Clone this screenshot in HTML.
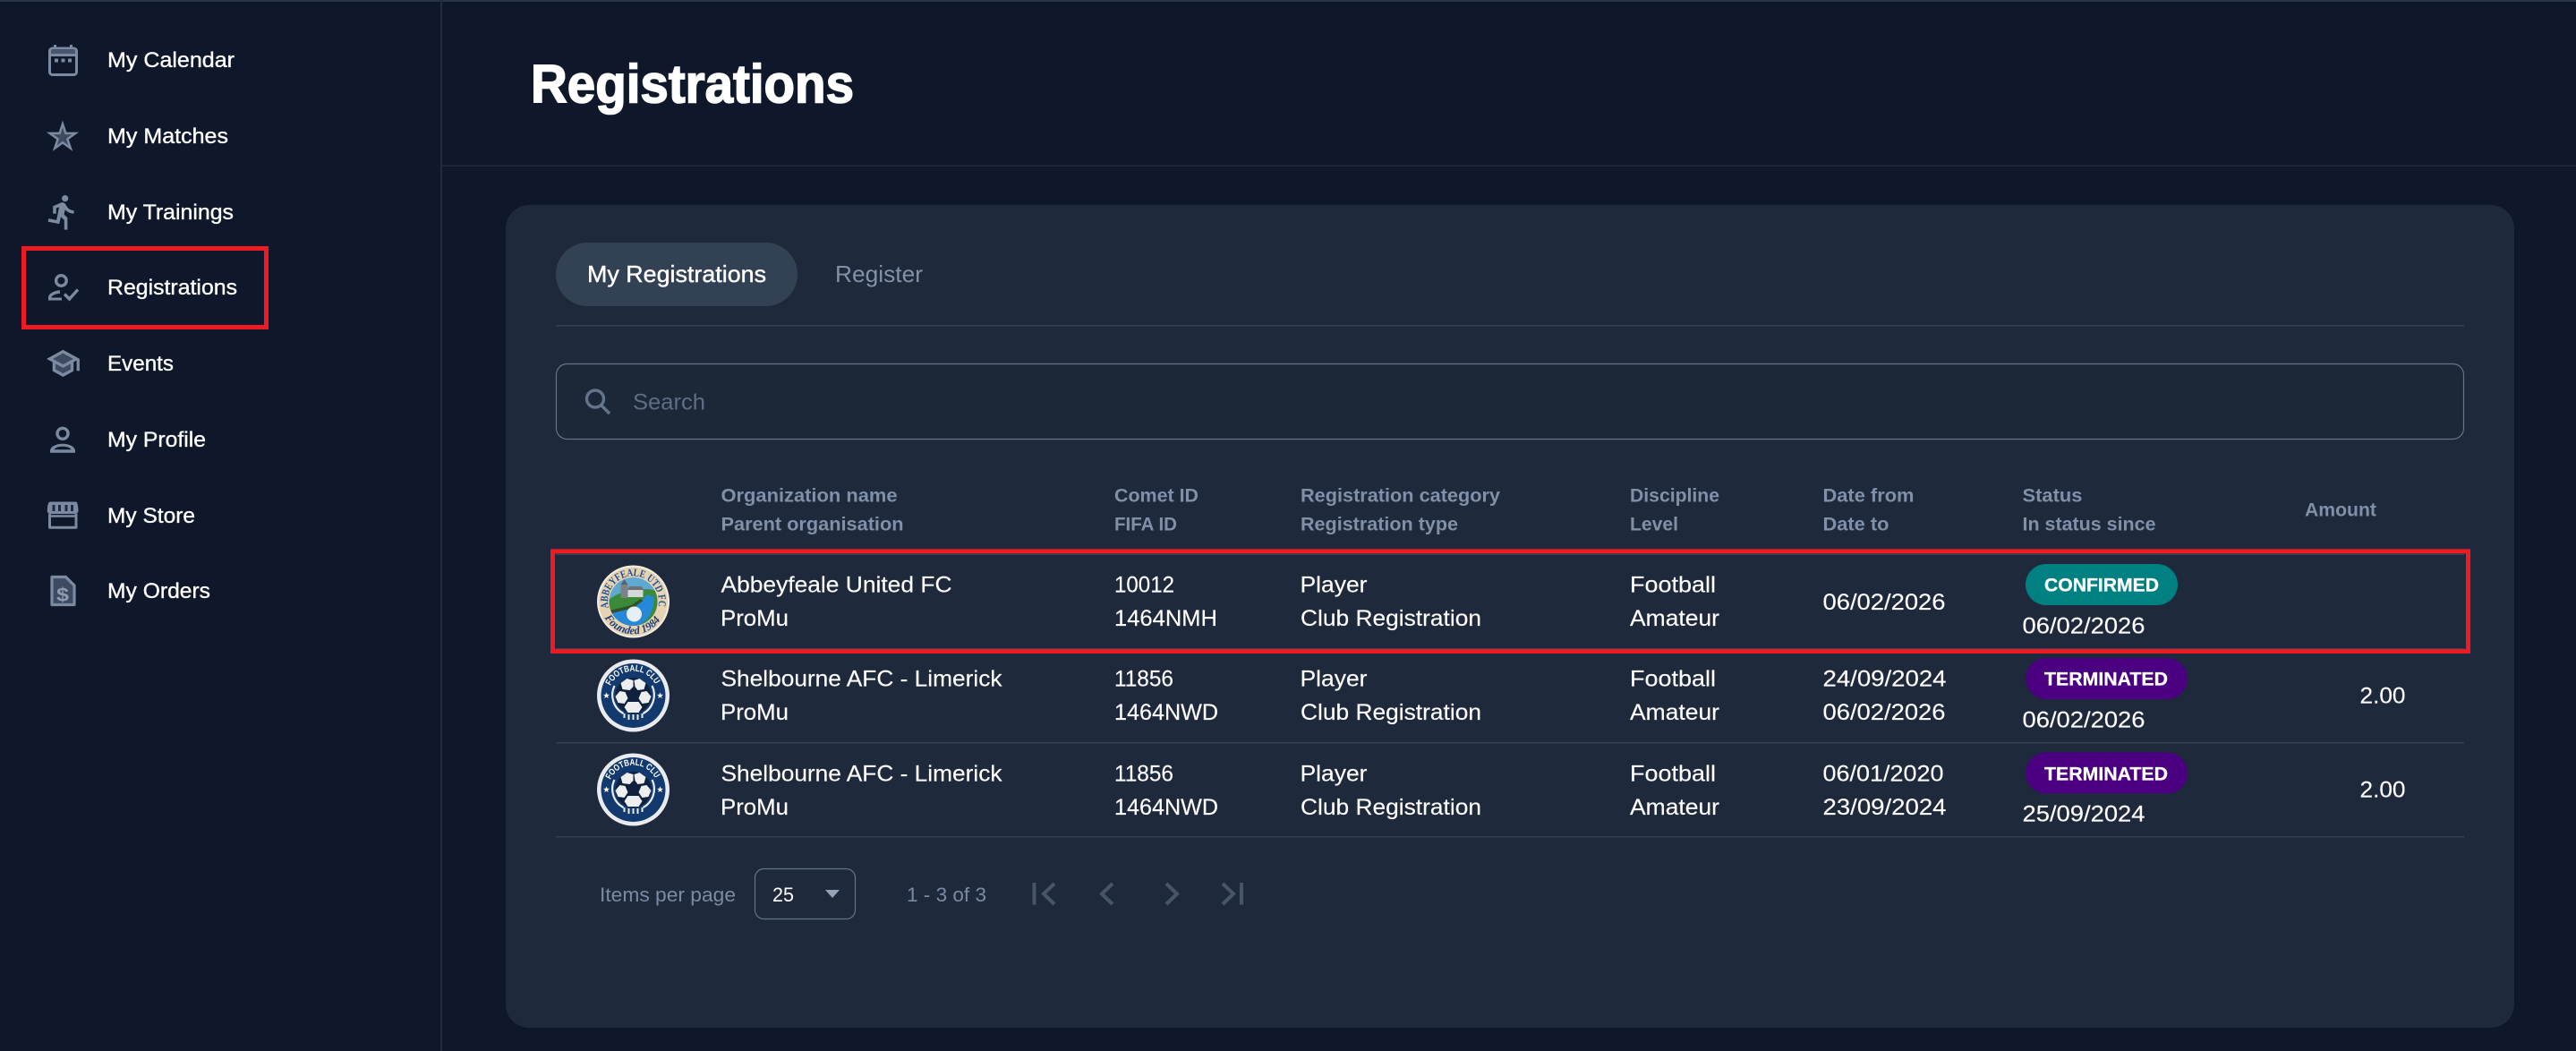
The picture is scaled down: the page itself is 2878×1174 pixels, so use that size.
<!DOCTYPE html>
<html lang="en"><head><meta charset="utf-8"><title>Registrations</title>
<style>
html,body{margin:0;padding:0;background:#0f172a;width:2878px;height:1174px;overflow:hidden}
svg{display:block}
text{font-family:"Liberation Sans",sans-serif}
.nav{font-size:24.5px;fill:#fff;stroke:#fff;stroke-width:.35px}
.th{font-size:21px;font-weight:700;fill:#8090a8}
.td{font-size:25px;fill:#fff;stroke:#fff;stroke-width:.15px}
.bd{font-size:21px;font-weight:700;fill:#fff;stroke:#fff;stroke-width:.3px}
.pg{font-size:22px;fill:#7b8aa3}
</style></head><body>
<svg xmlns="http://www.w3.org/2000/svg" width="2878" height="1174" viewBox="0 0 2878 1174">
<defs>
<path id="arcT" d="M-27.6 7A28.5 28.5 0 1 1 27.6 7"/>
<path id="arcB" d="M-32 18A37 37 0 0 0 32 18"/>
<path id="arcF" d="M-25.5 -11A28 28 0 0 1 25.5 -11"/>
<clipPath id="inner"><circle r="27"/></clipPath>
<polygon id="st" points="0,-3.6 1,-1.1 3.5,-1.1 1.5,.5 2.2,3 0,1.5 -2.2,3 -1.5,.5 -3.5,-1.1 -1,-1.1" fill="#fff"/>
<g id="fc">
<circle r="40.5" fill="#e9ebee"/>
<circle r="36" fill="#123a6e"/>
<text style="font-size:10px;font-weight:700" fill="#fff"><textPath href="#arcF" textLength="68" lengthAdjust="spacingAndGlyphs">FOOTBALL CLUB</textPath></text>
<use href="#st" x="-30" y="0"/><use href="#st" x="30" y="0"/>
<path d="M-21 -11A23.5 23.5 0 0 0 -11 20M21 -11A23.5 23.5 0 0 1 11 20" fill="none" stroke="#e9ebee" stroke-width="2.2"/>
<circle r="20" fill="#0f203c"/>
<g fill="#eceef0">
<polygon points="-7,-19 0,-17 0,-10 -4,-6 -12,-7 -14,-14"/>
<polygon points="7,-19 1,-17 2,-10 5,-6 12,-7 14,-14"/>
<polygon points="-15,-5 -9,-4 -6,3 -10,9 -17,8 -20,1"/>
<polygon points="15,-5 9,-4 6,3 10,9 17,8 20,1"/>
<polygon points="-6,7 6,7 10,13 6,19 -6,19 -10,13"/>
</g>
<g fill="#e9ebee"><rect x="-11" y="20" width="2" height="5"/><rect x="-6" y="21" width="2" height="6"/><rect x="-1" y="21" width="2" height="6"/><rect x="4" y="21" width="2" height="6"/><rect x="9" y="20" width="2" height="5"/></g>
</g>
</defs>

<rect width="2878" height="1174" fill="#0f172a"/>
<rect y="0" width="2878" height="2" fill="#283347"/>
<rect x="492" y="0" width="2" height="1174" fill="#232d40"/>
<rect x="494" y="184.5" width="2384" height="1.5" fill="#212b3e"/>

<!-- sidebar icons -->
<g fill="none" stroke="#7b8aa0" stroke-width="3">
<rect x="55.5" y="54" width="30" height="29.5" rx="3" fill="#0f172a"/>
<rect x="57" y="56" width="27" height="4" fill="#4a566b" stroke="none"/>
<path d="M56 61.5H85"/>
<path d="M61.5 50v4M79.5 50v4"/>
<g fill="#7b8aa0" stroke="none"><rect x="61" y="65.5" width="4" height="4"/><rect x="68.5" y="65.5" width="4" height="4"/><rect x="76" y="65.5" width="4" height="4"/></g>
<path d="M70 138.5L73.4 148.9H84.300L75.400 155.300L78.800 165.600L70 159.200L61.200 165.600L64.600 155.300L55.700 148.900H66.600z" fill="#3d4a60" stroke-width="2.5" stroke-linejoin="miter"/>
<circle cx="68.4" cy="313.5" r="5.800" stroke-width="3.400"/>
<path d="M55.500 333c0-4 5.500-6.500 11.500-7" stroke-width="3.400"/>
<path d="M54 334H69" stroke-width="3"/>
<path d="M72 328.500l5.500 5.500L87 323.500" stroke-width="3.400"/>
<circle cx="70" cy="484.3" r="6" stroke-width="3.400"/>
<path d="M55.500 574V589.300H85V574" stroke-width="3" stroke-linejoin="round"/>
<path d="M55 576.500H85" stroke-width="2.500"/>
<path d="M58 644.500H73.500L83 654V675.500H58z" fill="#3d4a60" stroke-width="3.200" stroke-linejoin="round"/>
</g>
<path d="M56 560.500H85Q87 561 87.500 570Q87.500 574 84 574H56.500Q52.500 574 52.800 570Q53 561 56 560.500z" fill="#7b8aa0"/>
<g fill="#1f2a3e"><rect x="58.500" y="564" width="3" height="7"/><rect x="65" y="564" width="3" height="7"/><rect x="72.500" y="564" width="3" height="7"/><rect x="79" y="564" width="3" height="7"/></g>
<path d="M13.49 5.480c1.100 0 2-.9 2-2s-.9-2-2-2-2 .9-2 2 .9 2 2 2zm-3.600 13.900l1-4.400 2.100 2v6h2v-7.500l-2.100-2 .6-3c1.300 1.500 3.300 2.500 5.500 2.500v-2c-1.900 0-3.500-1-4.300-2.400l-1-1.600c-.4-.6-1-1-1.700-1-.3 0-.5.100-.8.100l-5.200 2.200v4.700h2v-3.400l1.800-.7-1.600 8.100-4.900-1-.4 2 7 1.400z" transform="translate(48.400 215.300) scale(1.800)" fill="#7b8aa0"/>
<g transform="translate(50.300 385.700) scale(1.680)">
<path d="M12 3L1 9l4 2.180v6L12 21l7-3.820v-6l2-1.090V17h2V9L12 3z" fill="#7b8aa0"/>
<path d="M12 5.280L18.820 9 12 12.720 5.180 9zM17 16L12 18.720 7 16v-3.730L12 15l5-2.730z" fill="#3d4a60"/>
</g>
<path d="M56 505.700v-2c0-5 7-8 14-8s14 3 14 8v2z" fill="#7b8aa0"/>
<path d="M60.500 502.300c1-2.300 5-3.500 9.500-3.500s8.500 1.200 9.500 3.500z" fill="#0f172a"/>
<text x="63" y="671.500" style="font-size:21px;font-weight:700" fill="#8e9cb2" textLength="14" lengthAdjust="spacingAndGlyphs">$</text>

<!-- sidebar text -->
<g>
<text class="nav" x="120" y="75" textLength="142" lengthAdjust="spacingAndGlyphs">My Calendar</text>
<text class="nav" x="120" y="160" textLength="135" lengthAdjust="spacingAndGlyphs">My Matches</text>
<text class="nav" x="120" y="245" textLength="141" lengthAdjust="spacingAndGlyphs">My Trainings</text>
<text class="nav" x="120" y="329" textLength="145" lengthAdjust="spacingAndGlyphs">Registrations</text>
<text class="nav" x="120" y="414" textLength="74" lengthAdjust="spacingAndGlyphs">Events</text>
<text class="nav" x="120" y="499" textLength="110" lengthAdjust="spacingAndGlyphs">My Profile</text>
<text class="nav" x="120" y="584" textLength="98" lengthAdjust="spacingAndGlyphs">My Store</text>
<text class="nav" x="120" y="668" textLength="115" lengthAdjust="spacingAndGlyphs">My Orders</text>
</g>
<rect x="26.500" y="277.500" width="271" height="88" fill="none" stroke="#ed1c24" stroke-width="5"/>

<!-- title -->
<text x="593" y="114.300" style="font-size:60px;font-weight:700" fill="#fff" stroke="#fff" stroke-width="1.600" textLength="361" lengthAdjust="spacingAndGlyphs">Registrations</text>

<!-- card -->
<rect x="565" y="229" width="2244" height="919" rx="26" fill="#1e293b"/>
<rect x="621" y="271" width="270" height="71" rx="35.500" fill="#334155"/>
<text x="656" y="315" style="font-size:26px" fill="#fff" stroke="#fff" stroke-width=".4" textLength="200" lengthAdjust="spacingAndGlyphs">My Registrations</text>
<text x="933" y="315" style="font-size:26px" fill="#8291a8" textLength="98" lengthAdjust="spacingAndGlyphs">Register</text>
<rect x="621" y="363" width="2132" height="1.500" fill="#334155"/>
<rect x="621.500" y="406.500" width="2131" height="84" rx="12" fill="#1c2737" stroke="#64748b" stroke-width="1.200"/>
<circle cx="665" cy="445.500" r="9.500" fill="none" stroke="#64748b" stroke-width="3.400"/>
<path d="M672 453l9 9" stroke="#64748b" stroke-width="3.400"/>
<text x="707" y="457.700" style="font-size:25px" fill="#5d6e86" textLength="81" lengthAdjust="spacingAndGlyphs">Search</text>

<!-- table header -->
<g>
<text class="th" x="805.500" y="560.700" textLength="197" lengthAdjust="spacingAndGlyphs">Organization name</text>
<text class="th" x="805.500" y="592.700" textLength="204" lengthAdjust="spacingAndGlyphs">Parent organisation</text>
<text class="th" x="1245" y="560.700" textLength="94" lengthAdjust="spacingAndGlyphs">Comet ID</text>
<text class="th" x="1245" y="592.700" textLength="70" lengthAdjust="spacingAndGlyphs">FIFA ID</text>
<text class="th" x="1453" y="560.700" textLength="223" lengthAdjust="spacingAndGlyphs">Registration category</text>
<text class="th" x="1453" y="592.700" textLength="176" lengthAdjust="spacingAndGlyphs">Registration type</text>
<text class="th" x="1821" y="560.700" textLength="100" lengthAdjust="spacingAndGlyphs">Discipline</text>
<text class="th" x="1821" y="592.700" textLength="54" lengthAdjust="spacingAndGlyphs">Level</text>
<text class="th" x="2036.500" y="560.700" textLength="102" lengthAdjust="spacingAndGlyphs">Date from</text>
<text class="th" x="2036.500" y="592.700" textLength="74" lengthAdjust="spacingAndGlyphs">Date to</text>
<text class="th" x="2259.500" y="560.700" textLength="67" lengthAdjust="spacingAndGlyphs">Status</text>
<text class="th" x="2259.500" y="592.700" textLength="149" lengthAdjust="spacingAndGlyphs">In status since</text>
<text class="th" x="2575" y="576.700" textLength="80" lengthAdjust="spacingAndGlyphs">Amount</text>
</g>

<!-- row lines -->
<g fill="#334155">
<rect x="621" y="618.500" width="2132" height="1.500"/>
<rect x="621" y="724" width="2132" height="1.500"/>
<rect x="621" y="829" width="2132" height="1.500"/>
<rect x="621" y="934" width="2132" height="1.500"/>
</g>

<!-- logos -->
<g transform="translate(707.500 672)">
<circle r="40.500" fill="#f3eee2"/>
<circle r="38.500" fill="#e6d3b4"/>
<g clip-path="url(#inner)">
<rect x="-27" y="-27" width="54" height="54" fill="#5fa9d0"/>
<path d="M-27 -2C-18 -10 -6 -12 5 -13C13 -14 20 -15 27 -11V27H-27z" fill="#3a8a3a"/>
<path d="M-27 13C-10 9 8 5 15 -8L23 -5C24 12 14 27 -2 28L-27 27z" fill="#2688d8"/>
<path d="M-27 10L-2 4 8 -3 11 -1 0 7-27 14z" fill="#33502a"/>
<rect x="-14" y="-19" width="8" height="15" fill="#7a8288"/>
<path d="M-14 -19l4-6 4 6z" fill="#59636b"/>
<rect x="-6" y="-13" width="17" height="8" fill="#d5d8d6"/>
<path d="M-7 -13l3-4h13l3 4z" fill="#6a7177"/>
<circle cx="1" cy="14" r="8.500" fill="#e6f0f4"/>
</g>
<text style="font-family:'Liberation Serif',serif;font-size:12px;font-weight:700" fill="#1f4d8f"><textPath href="#arcT" textLength="102" lengthAdjust="spacingAndGlyphs">ABBEYFEALE UTD FC</textPath></text>
<text style="font-family:'Liberation Serif',serif;font-size:12.500px;font-style:italic;font-weight:700" fill="#1d3f78"><textPath href="#arcB" textLength="74" lengthAdjust="spacingAndGlyphs">Founded 1984</textPath></text>
</g>
<use href="#fc" x="707.500" y="777"/>
<use href="#fc" x="707.500" y="882"/>

<!-- row 1 -->
<text class="td" x="805.500" y="661.700" textLength="258" lengthAdjust="spacingAndGlyphs">Abbeyfeale United FC</text>
<text class="td" x="805" y="699" textLength="76" lengthAdjust="spacingAndGlyphs">ProMu</text>
<text class="td" x="1245" y="661.700" textLength="67" lengthAdjust="spacingAndGlyphs">10012</text>
<text class="td" x="1245" y="699" textLength="115" lengthAdjust="spacingAndGlyphs">1464NMH</text>
<text class="td" x="1452.500" y="661.700" textLength="75" lengthAdjust="spacingAndGlyphs">Player</text>
<text class="td" x="1453" y="699" textLength="202" lengthAdjust="spacingAndGlyphs">Club Registration</text>
<text class="td" x="1821" y="661.700" textLength="96" lengthAdjust="spacingAndGlyphs">Football</text>
<text class="td" x="1821" y="699" textLength="100" lengthAdjust="spacingAndGlyphs">Amateur</text>
<text class="td" x="2036.500" y="681" textLength="137" lengthAdjust="spacingAndGlyphs">06/02/2026</text>
<rect x="2263" y="630" width="170" height="46" rx="23" fill="#008080"/>
<text class="bd" x="2284" y="660.700" textLength="128" lengthAdjust="spacingAndGlyphs">CONFIRMED</text>
<text class="td" x="2259.500" y="707.300" textLength="137" lengthAdjust="spacingAndGlyphs">06/02/2026</text>

<!-- row 2 -->
<text class="td" x="805.500" y="766.700" textLength="314" lengthAdjust="spacingAndGlyphs">Shelbourne AFC - Limerick</text>
<text class="td" x="805" y="804" textLength="76" lengthAdjust="spacingAndGlyphs">ProMu</text>
<text class="td" x="1245" y="766.700" textLength="66" lengthAdjust="spacingAndGlyphs">11856</text>
<text class="td" x="1245" y="804" textLength="116" lengthAdjust="spacingAndGlyphs">1464NWD</text>
<text class="td" x="1452.500" y="766.700" textLength="75" lengthAdjust="spacingAndGlyphs">Player</text>
<text class="td" x="1453" y="804" textLength="202" lengthAdjust="spacingAndGlyphs">Club Registration</text>
<text class="td" x="1821" y="766.700" textLength="96" lengthAdjust="spacingAndGlyphs">Football</text>
<text class="td" x="1821" y="804" textLength="100" lengthAdjust="spacingAndGlyphs">Amateur</text>
<text class="td" x="2036.500" y="766.700" textLength="138" lengthAdjust="spacingAndGlyphs">24/09/2024</text>
<text class="td" x="2036.500" y="804" textLength="137" lengthAdjust="spacingAndGlyphs">06/02/2026</text>
<rect x="2263" y="735" width="181" height="46" rx="23" fill="#4b0082"/>
<text class="bd" x="2284" y="765.700" textLength="138" lengthAdjust="spacingAndGlyphs">TERMINATED</text>
<text class="td" x="2259.500" y="812.300" textLength="137" lengthAdjust="spacingAndGlyphs">06/02/2026</text>
<text class="td" x="2636.500" y="785.700" textLength="51" lengthAdjust="spacingAndGlyphs">2.00</text>

<!-- row 3 -->
<text class="td" x="805.500" y="872.700" textLength="314" lengthAdjust="spacingAndGlyphs">Shelbourne AFC - Limerick</text>
<text class="td" x="805" y="910" textLength="76" lengthAdjust="spacingAndGlyphs">ProMu</text>
<text class="td" x="1245" y="872.700" textLength="66" lengthAdjust="spacingAndGlyphs">11856</text>
<text class="td" x="1245" y="910" textLength="116" lengthAdjust="spacingAndGlyphs">1464NWD</text>
<text class="td" x="1452.500" y="872.700" textLength="75" lengthAdjust="spacingAndGlyphs">Player</text>
<text class="td" x="1453" y="910" textLength="202" lengthAdjust="spacingAndGlyphs">Club Registration</text>
<text class="td" x="1821" y="872.700" textLength="96" lengthAdjust="spacingAndGlyphs">Football</text>
<text class="td" x="1821" y="910" textLength="100" lengthAdjust="spacingAndGlyphs">Amateur</text>
<text class="td" x="2036.500" y="872.700" textLength="135" lengthAdjust="spacingAndGlyphs">06/01/2020</text>
<text class="td" x="2036.500" y="910" textLength="138" lengthAdjust="spacingAndGlyphs">23/09/2024</text>
<rect x="2263" y="840.500" width="181" height="46" rx="23" fill="#4b0082"/>
<text class="bd" x="2284" y="871.700" textLength="138" lengthAdjust="spacingAndGlyphs">TERMINATED</text>
<text class="td" x="2259.500" y="917.700" textLength="137" lengthAdjust="spacingAndGlyphs">25/09/2024</text>
<text class="td" x="2636.500" y="890.700" textLength="51" lengthAdjust="spacingAndGlyphs">2.00</text>

<!-- red highlight -->
<rect x="617.500" y="615.800" width="2140" height="111.700" fill="none" stroke="#ed1c24" stroke-width="5"/>

<!-- pagination -->
<text class="pg" x="670" y="1007" textLength="152" lengthAdjust="spacingAndGlyphs">Items per page</text>
<rect x="843.500" y="970.500" width="112" height="56" rx="10" fill="none" stroke="#64748b" stroke-width="1.200"/>
<text x="863" y="1007" style="font-size:22px" fill="#fff" textLength="24" lengthAdjust="spacingAndGlyphs">25</text>
<path d="M922 994h16l-8 9z" fill="#94a3b8"/>
<text class="pg" x="1013" y="1007" textLength="89" lengthAdjust="spacingAndGlyphs">1 - 3 of 3</text>
<g fill="none" stroke="#475569" stroke-width="4">
<path d="M1155.500 986v24.700"/>
<path d="M1178 987l-12 11.500 12 11.500"/>
<path d="M1243 987l-12 11.500 12 11.500"/>
<path d="M1303 987l12 11.500-12 11.500"/>
<path d="M1366 987l12 11.500-12 11.500"/>
<path d="M1387 986v24.700"/>
</g>
</svg>
</body></html>
